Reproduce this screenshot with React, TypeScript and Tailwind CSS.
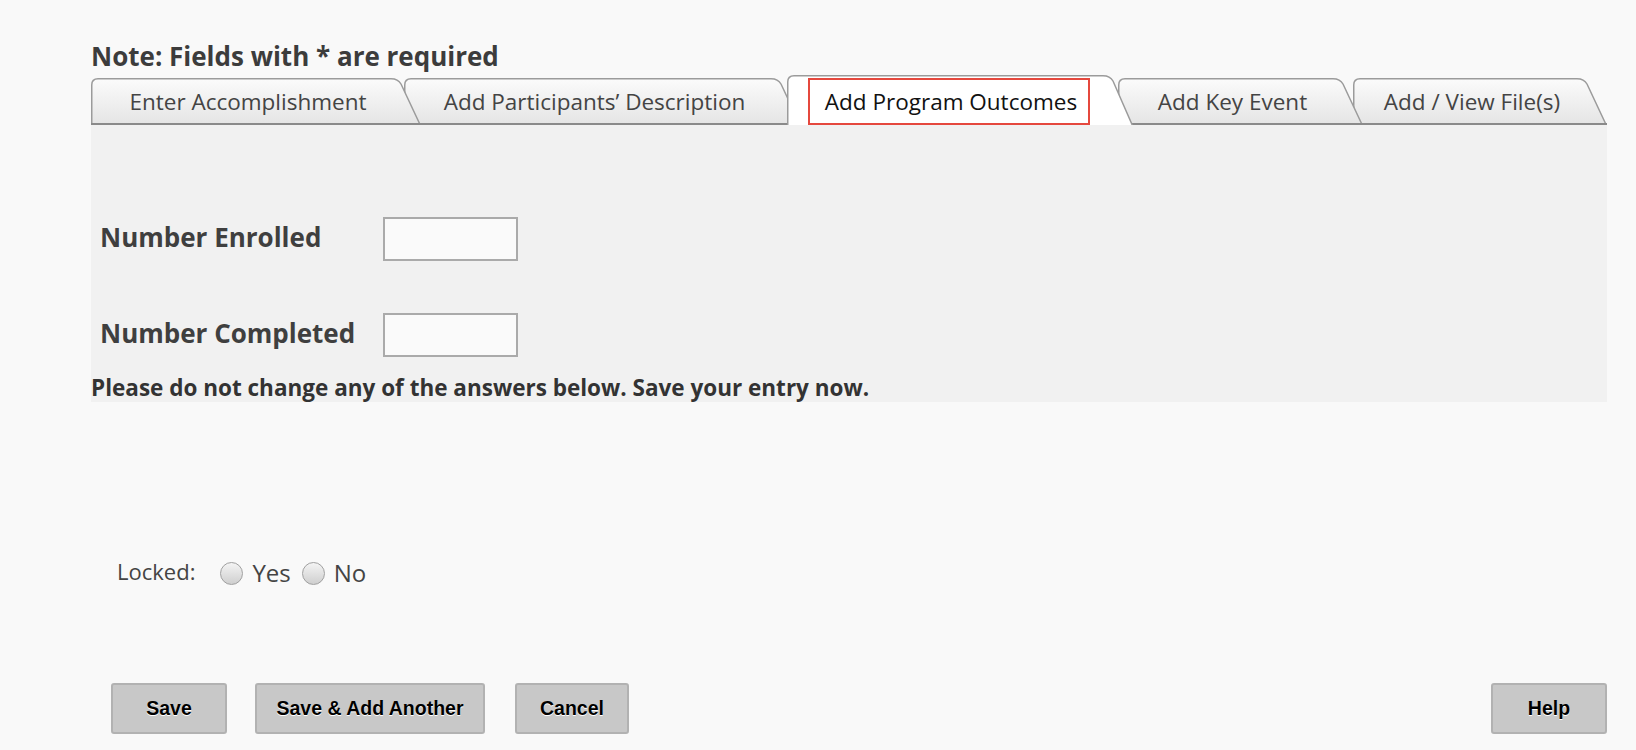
import React from 'react'

type TabDef = {
  label: string
  width: number
  ml: string
  z: string
  active?: boolean
}

const tabs: TabDef[] = [
  { label: 'Enter Accomplishment', width: 330, ml: 'ml-0', z: 'z-40' },
  { label: 'Add Participants’ Description', width: 397, ml: '-ml-[17px]', z: 'z-30' },
  { label: 'Add Program Outcomes', width: 346, ml: '-ml-[14px]', z: 'z-50', active: true },
  { label: 'Add Key Event', width: 245, ml: '-ml-[15px]', z: 'z-20' },
  { label: 'Add / View File(s)', width: 254, ml: '-ml-[10px]', z: 'z-10' },
]

// tab outline: rounded top-left, curved top-right then a slanted right edge
function TabShape({ w, h, active }: { w: number; h: number; active?: boolean }) {
  const s = 22
  const d = `M0.75,${h} L0.75,7 Q0.75,0.75 7,0.75 L${w - s - 8},0.75 Q${w - s - 1},0.75 ${w - s + 2},6 L${w - 0.75},${h}`
  const id = active ? 'tabActive' : 'tabIdle'
  return (
    <svg className="absolute inset-0" width={w} height={h} viewBox={`0 0 ${w} ${h}`}>
      <defs>
        <linearGradient id={id} x1="0" y1="0" x2="0" y2="1">
          <stop offset="0" stopColor={active ? '#ffffff' : '#fbfbfb'} />
          <stop offset="1" stopColor={active ? '#ffffff' : '#e4e4e4'} />
        </linearGradient>
      </defs>
      <path d={d + ' Z'} fill={`url(#${id})`} stroke="none" />
      <path d={d} fill="none" stroke="#9b9b9b" strokeWidth="1.5" />
      {!active && <line x1="0" y1={h - 1} x2={w} y2={h - 1} stroke="#8a8a8a" strokeWidth="2" />}
    </svg>
  )
}

function Tab({ tab }: { tab: TabDef }) {
  const h = tab.active ? 50 : 47
  return (
    <div className={`relative shrink-0 ${tab.ml} ${tab.z}`} style={{ width: tab.width, height: h }}>
      <TabShape w={tab.width} h={h} active={tab.active} />
      {tab.active ? (
        <div className="relative flex h-full items-start pl-[21px]">
          <div className="mt-[3px] flex h-[47px] w-[282px] items-center justify-center border-2 border-[#e5483e] pl-[4px] text-[22.5px] text-[#111]">
            {tab.label}
          </div>
        </div>
      ) : (
        <div className="relative flex h-full items-center justify-center pl-[6px] pr-[22px] text-[22.5px] text-[#444]">
          {tab.label}
        </div>
      )}
    </div>
  )
}

function Radio({ label }: { label: string }) {
  return (
    <label className="flex items-center">
      <span className="h-[23px] w-[23px] rounded-full border border-[#a0a0a0] bg-gradient-to-b from-[#f4f4f4] to-[#cfcfcf]" />
      <span className="ml-[9px] text-[24px] text-[#444]">{label}</span>
    </label>
  )
}

function Button({ label, w }: { label: string; w: string }) {
  return (
    <button
      className={`${w} h-[51px] rounded-[3px] border-2 border-[#b2b2b2] bg-[#c8c8c8] text-[19.5px] font-bold text-black [text-shadow:0_1px_0_#ffffff]`}
      style={{ fontFamily: '"Liberation Sans", Arial, sans-serif' }}
    >
      {label}
    </button>
  )
}

export default function App() {
  return (
    <div className="min-h-[750px] bg-[#f9f9f9] font-['Open_Sans',sans-serif]">
      <div className="ml-[91px] w-[1516px] pt-[39px]">
        <h1 className="h-[34px] text-[26px] font-bold leading-[34px] text-[#3c3c3c]">
          Note: Fields with * are required
        </h1>

        <div className="mt-[2px] flex h-[50px] items-end">
          {tabs.map((t) => (
            <Tab key={t.label} tab={t} />
          ))}
        </div>

        <div className="h-[277px] bg-[#f1f1f1] pt-[92px]">
          <div className="flex h-[44px] items-center">
            <span className="-mt-[4px] w-[292px] pl-[9px] text-[26px] font-bold text-[#3f3f3f]">Number Enrolled</span>
            <input className="h-[44px] w-[135px] border-2 border-[#aaaaaa] bg-[#fafafa] outline-none" />
          </div>
          <div className="mt-[52px] flex h-[44px] items-center">
            <span className="-mt-[4px] w-[292px] pl-[9px] text-[26px] font-bold text-[#3f3f3f]">Number Completed</span>
            <input className="h-[44px] w-[135px] border-2 border-[#aaaaaa] bg-[#fafafa] outline-none" />
          </div>
          <p className="mt-[17px] text-[22.5px] font-bold leading-[28px] text-[#333]">
            Please do not change any of the answers below. Save your entry now.
          </p>
        </div>

        <div className="mt-[156px] flex h-[30px] items-center pl-[26px]">
          <span className="-mt-[4px] mr-[25px] text-[22px] text-[#444]">Locked:</span>
          <Radio label="Yes" />
          <span className="w-[11px]" />
          <Radio label="No" />
        </div>

        <div className="mt-[95px] flex items-center pl-[20px]">
          <Button label="Save" w="w-[116px]" />
          <span className="w-[28px]" />
          <Button label="Save & Add Another" w="w-[230px]" />
          <span className="w-[30px]" />
          <Button label="Cancel" w="w-[114px]" />
          <span className="flex-1" />
          <Button label="Help" w="w-[116px]" />
        </div>
      </div>
    </div>
  )
}
